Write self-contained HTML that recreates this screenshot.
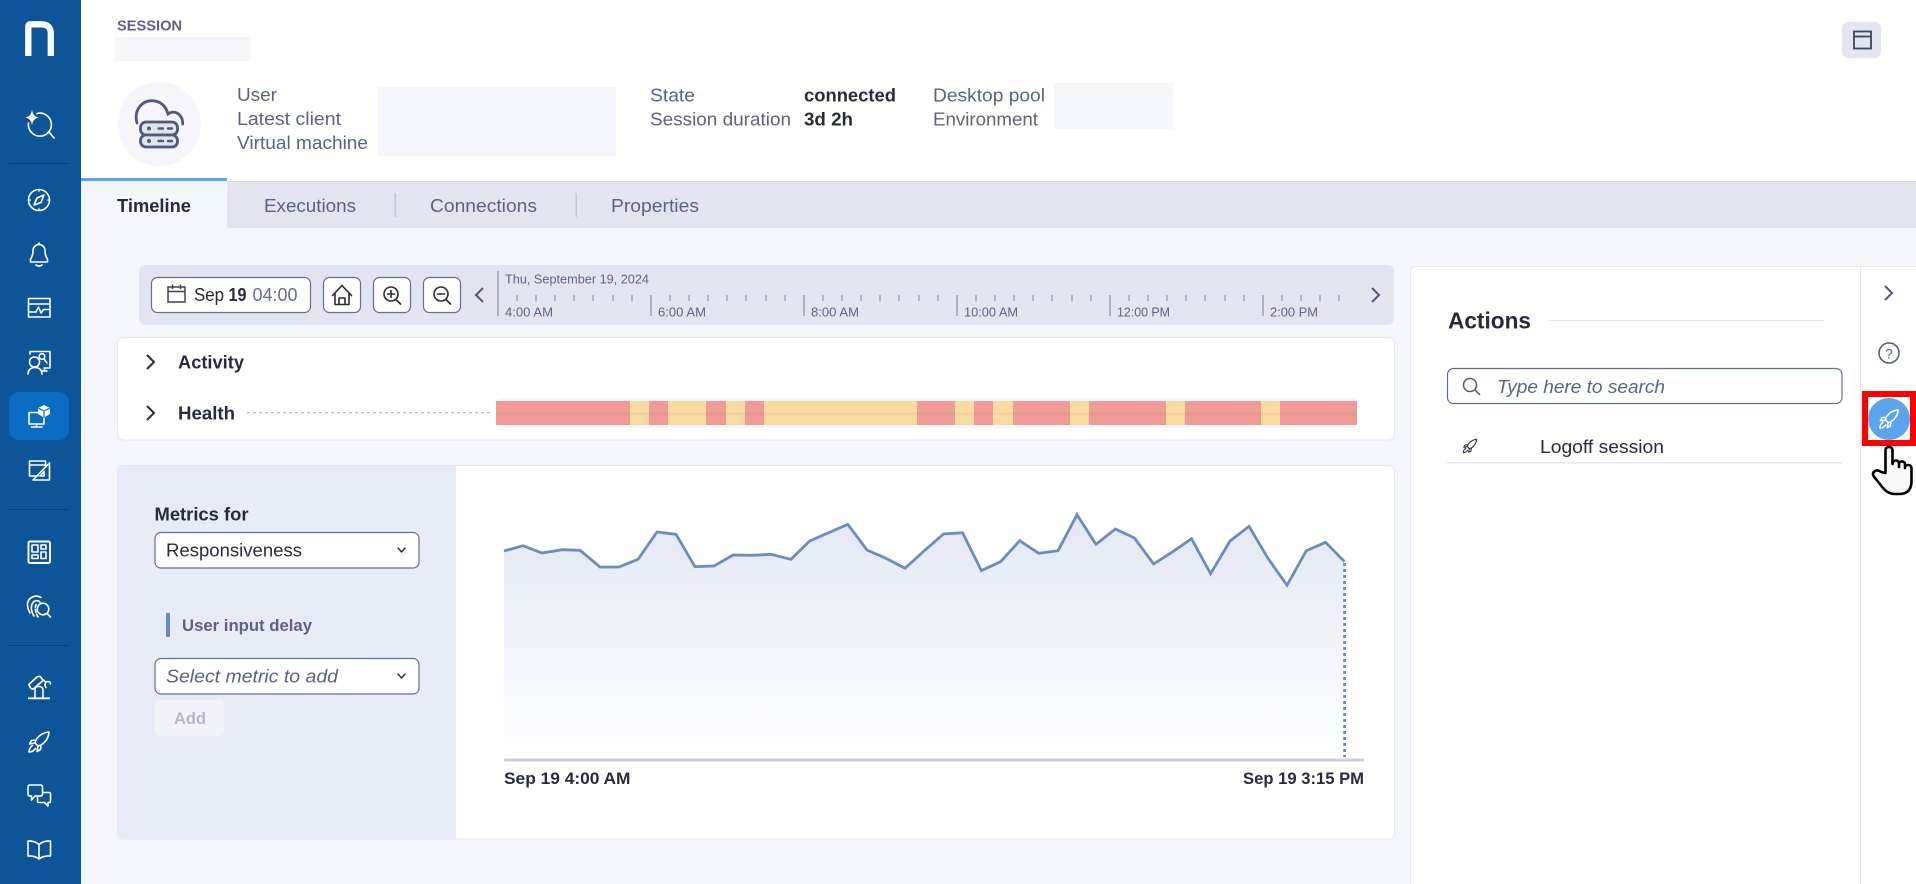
<!DOCTYPE html>
<html lang="en">
<head>
<meta charset="utf-8">
<title>Session</title>
<style>
html,body{margin:0;padding:0;width:1916px;height:884px;overflow:hidden;background:#f4f6fb}
svg{display:block;position:absolute;left:0;top:0}
text{font-family:"Liberation Sans",sans-serif;font-size:18px;fill:#5a6480;white-space:pre}
.d{fill:#262c3c}
.b{font-weight:700}
.i{font-style:italic}
.t{font-size:13px;fill:#5c6684}
.w{fill:none;stroke:#fff;stroke-width:1.6;stroke-linecap:round;stroke-linejoin:round}
.s{fill:none;stroke:#4f5a78;stroke-width:1.6;stroke-linecap:round;stroke-linejoin:round}
.k{fill:none;stroke:#262c3c;stroke-width:1.6;stroke-linecap:round;stroke-linejoin:round}
.btn{fill:#fff;stroke:#5f6f92;stroke-width:1.2}
</style>
</head>
<body>
<svg width="1916" height="884" viewBox="0 0 1916 884" xmlns="http://www.w3.org/2000/svg">
<defs>
<linearGradient id="g" x1="0" y1="0" x2="0" y2="1"><stop offset="0" stop-color="#e2e7f2"/><stop offset="1" stop-color="#ffffff"/></linearGradient>
<symbol id="rocket" viewBox="0 0 24 24" overflow="visible">
<path d="M22 2C17 2.500 12 5 9 10L8 13L11 16L14 15C19 12 21.500 7 22 2Z"/>
<path d="M9 10L4.500 10.500L2.500 14L8 13M14 15L13.500 19.500L10 21.500L11 16"/>
<path d="M5.500 15.500Q2 18 2 22Q6 22 8.500 18.500"/>
</symbol>
</defs>

<!-- page -->
<rect width="1916" height="884" fill="#f4f6fb"/>

<!-- sidebar -->
<rect width="81" height="884" fill="#0d5498"/>
<path d="M28.300 56V26.500Q28.300 24.300 30.500 24.300H41Q50.800 24.300 50.800 33.500V56" fill="none" stroke="#fff" stroke-width="6.300"/>
<path d="M32 110Q33 116.500 38.500 117.500Q33 118.500 32 125Q31 118.500 25.500 117.500Q31 116.500 32 110Z" fill="#fff"/>
<path class="w" d="M37 113.500A11.500 11.500 0 1 1 28.500 123M48.500 131.500L54 138"/>
<rect x="9" y="163" width="60" height="1" fill="#0a3e74"/>
<circle class="w" cx="39" cy="200" r="10.500"/>
<path class="w" d="M44 195L41 202.500L34 205L37 198Z"/>
<path class="w" d="M39 189.500V191M39 209V210.500M28.500 200H30M48 200H49.500"/>
<path class="w" d="M30.500 262H47.500V259Q45 256 45 250.500A6 6 0 0 0 33 250.500Q33 256 30.500 259ZM39 244.500V243M36 265Q39 267 42 265"/>
<path class="w" d="M28.500 298.500H50V317H28.500ZM28.500 304H50M28.500 312H36L38.500 307L41 313L43.500 309.500H50"/>
<path class="w" d="M30 354V351.500H50V368H44M42 371H47M44.500 368V371"/>
<circle class="w" cx="34.500" cy="362" r="5"/>
<circle class="w" cx="42" cy="356.500" r="2.800"/>
<path class="w" d="M44 359L47 363M28 374Q28.500 367.500 35 367.500Q41.500 367.500 42 374"/>
<rect x="9" y="392" width="60" height="48" rx="10" fill="#0b6cc4"/>
<path class="w" d="M38 412.500H29V424H44V418M31.500 427H42M36.500 424V427"/>
<path d="M44 405L50 408V414L44 417.500L38 414V408Z" fill="#fff"/>
<path d="M38 408L44 411L50 408M44 411V417.500" fill="none" stroke="#0b6cc4" stroke-width="1.200"/>
<path class="w" d="M29.500 461H45.500V466M29.500 461V476H38M29.500 465H45.500"/>
<path class="w" d="M49.500 463V480H33ZM44 476H40L44 471.500Z"/>
<rect x="9" y="509" width="60" height="1" fill="#0a3e74"/>
<rect x="28.500" y="541.500" width="21.500" height="21.500" rx="1.500" fill="none" stroke="#fff" stroke-width="1.900"/>
<path class="w" d="M32 545H38V552H32ZM41 545H46V549H41ZM41 552H46V558.500H41ZM32 555H38V558.500H32Z"/>
<path class="w" d="M30 613C26 606 27 600 31.500 597.500C35 595.500 38.500 596 41 597.500"/>
<path class="w" d="M34 616C30 610 31 604 34 601.500C37 600 39 601 40 602"/>
<path class="w" d="M36 604.500C34.500 608 35.500 613 38 617" stroke-dasharray="3 2"/>
<circle class="w" cx="43" cy="609" r="5.800"/>
<path class="w" d="M47 613.500L50.500 617"/>
<rect x="9" y="645" width="60" height="1" fill="#0a3e74"/>
<path d="M28 698.300H50" stroke="#fff" stroke-width="1.800"/>
<path class="w" d="M35 698V690Q35 686.500 38.500 686.500Q43 686.500 43 690V698"/>
<path class="w" d="M28.800 684.500L37 677Q39.500 675.500 41 677.500L43 680.500L34.500 688Q32.500 690 30.500 688Z"/>
<path class="w" d="M42 679L46 682M46 682Q50 680.500 50.500 684M46 682Q44 685 46 687.500"/>
<use href="#rocket" x="27" y="730" width="24" height="24" class="w"/>
<path class="w" d="M30 785H40.500Q42.500 785 42.500 787V794Q42.500 796 40.500 796H35L31.500 800V796H30Q28 796 28 794V787Q28 785 30 785Z"/>
<path class="w" d="M43 792.500H49Q50.500 792.500 50.500 794V801Q50.500 802.500 49 802.500H48V806L44.500 802.500H39Q37.500 802.500 37.500 801V796.500"/>
<path class="w" d="M39 844.500Q34.500 840.500 28 841V856Q34.500 855.500 39 859Q43.500 855.500 50.500 856V841Q43.500 840.500 39 844.500ZM39 844.500V859"/>

<!-- header -->
<rect x="81" width="1835" height="181" fill="#fff"/>
<text class="b" x="117" y="30.500" style="font-size:15px" textLength="65" lengthAdjust="spacingAndGlyphs">SESSION</text>
<rect x="115" y="37" width="136" height="24" fill="#f4f6fb"/>
<circle cx="159" cy="124" r="42" fill="#f4f6fb"/>
<path d="M137 123C133.500 110 142 100.700 152 100.700C160 100.700 166 106 168 114C175 109 183 115 182.700 124" fill="none" stroke="#4f5a78" stroke-width="2.800" stroke-linecap="round"/>
<rect x="140.500" y="122" width="37" height="13" rx="5.500" fill="#dfe4ef" stroke="#4f5a78" stroke-width="2.800"/>
<rect x="140.500" y="135" width="37" height="12" rx="5.500" fill="#dfe4ef" stroke="#4f5a78" stroke-width="2.800"/>
<circle cx="149" cy="128.500" r="2" fill="#4f5a78"/>
<circle cx="149" cy="141" r="2" fill="#4f5a78"/>
<path d="M158.500 128.500H163M168 128.500H172M158.500 141H163M168 141H172" stroke="#4f5a78" stroke-width="2.400" stroke-linecap="round"/>
<text x="237" y="101" textLength="40" lengthAdjust="spacingAndGlyphs">User</text>
<text x="237" y="125" textLength="104" lengthAdjust="spacingAndGlyphs">Latest client</text>
<text x="237" y="149" textLength="131" lengthAdjust="spacingAndGlyphs">Virtual machine</text>
<rect x="378" y="87" width="238" height="69" fill="#f4f6fb"/>
<text x="650" y="101.500" textLength="45" lengthAdjust="spacingAndGlyphs">State</text>
<text x="650" y="125.500" textLength="141" lengthAdjust="spacingAndGlyphs">Session duration</text>
<text class="d b" x="804" y="101.500" textLength="92" lengthAdjust="spacingAndGlyphs">connected</text>
<text class="d b" x="804" y="125.500" textLength="49" lengthAdjust="spacingAndGlyphs">3d 2h</text>
<text x="933" y="101.500" textLength="112" lengthAdjust="spacingAndGlyphs">Desktop pool</text>
<text x="933" y="125.500" textLength="105" lengthAdjust="spacingAndGlyphs">Environment</text>
<rect x="1054" y="83" width="119" height="46" fill="#f4f6fb"/>
<rect x="1842" y="22" width="39" height="36" rx="6" fill="#e2e5f0"/>
<rect x="1854" y="31.500" width="17" height="17" fill="none" stroke="#3a4258" stroke-width="1.800"/>
<path d="M1854 36.500H1871" stroke="#3a4258" stroke-width="1.800"/>

<!-- tabs -->
<rect x="81" y="181" width="1835" height="47" fill="#e2e5f0"/>
<rect x="81" y="181" width="1835" height="1" fill="#d6d9e6"/>
<rect x="81" y="181" width="146" height="47" fill="#f4f6fb"/>
<rect x="81" y="178" width="146" height="3" fill="#5aa5ec"/>
<text class="d b" x="117" y="212" textLength="74" lengthAdjust="spacingAndGlyphs">Timeline</text>
<text x="264" y="212" textLength="92" lengthAdjust="spacingAndGlyphs">Executions</text>
<rect x="394.500" y="193" width="1.500" height="24" fill="#c4c8d6"/>
<text x="430" y="212" textLength="107" lengthAdjust="spacingAndGlyphs">Connections</text>
<rect x="575.500" y="193" width="1.500" height="24" fill="#c4c8d6"/>
<text x="611" y="212" textLength="88" lengthAdjust="spacingAndGlyphs">Properties</text>

<!-- timeline toolbar -->
<rect x="139" y="265" width="1255" height="60" rx="6" fill="#e2e5f0"/>
<rect class="btn" x="151.500" y="277.500" width="159" height="35" rx="6"/>
<path d="M168 287H185V302H168ZM168 291.500H185M172.500 284.500V289M180.500 284.500V289" fill="none" stroke="#3a4258" stroke-width="1.500"/>
<text class="d" x="194" y="301" textLength="30" lengthAdjust="spacingAndGlyphs">Sep</text>
<text class="d b" x="228.500" y="301" textLength="18" lengthAdjust="spacingAndGlyphs">19</text>
<text x="252.500" y="301" textLength="45" lengthAdjust="spacingAndGlyphs" style="fill:#5f6f92">04:00</text>
<rect class="btn" x="323.500" y="277.500" width="37" height="35" rx="6"/>
<path class="k" d="M332.500 295.500L342 285.500L351.500 295.500M335 293V304.500H349V293M339 304.500V298H345V304.500"/>
<rect class="btn" x="373.500" y="277.500" width="37" height="35" rx="6"/>
<circle class="k" cx="391" cy="294" r="7"/>
<path class="k" d="M396 299.500L400.500 304M391 290.500V297.500M387.500 294H394.500"/>
<rect class="btn" x="423.500" y="277.500" width="37" height="35" rx="6"/>
<circle class="k" cx="441" cy="294" r="7"/>
<path class="k" d="M446 299.500L450.500 304M437.500 294H444.500"/>
<path d="M483 288L476 295L483 302" fill="none" stroke="#4f5a78" stroke-width="2"/>
<path d="M1372 288L1379 295L1372 302" fill="none" stroke="#4f5a78" stroke-width="2"/>
<path d="M498 271V316M651 295V316M804 295V316M957 295V316M1110 295V316M1263 295V316" stroke="#9aa0b6" stroke-width="1.500"/>
<path d="M517 295v6m19-6v6m19-6v6m19-6v6m19-6v6m20-6v6m19-6v6M670 295v6m19-6v6m19-6v6m19-6v6m19-6v6m20-6v6m19-6v6M823 295v6m19-6v6m19-6v6m19-6v6m19-6v6m20-6v6m19-6v6M976 295v6m19-6v6m19-6v6m19-6v6m19-6v6m20-6v6m19-6v6M1129 295v6m19-6v6m19-6v6m19-6v6m19-6v6m20-6v6m19-6v6M1282 295v6m19-6v6m19-6v6m19-6v6" stroke="#8f95ab" stroke-width="1.200"/>
<text class="t" x="505" y="283.500" textLength="144" lengthAdjust="spacingAndGlyphs">Thu, September 19, 2024</text>
<text class="t" x="505" y="316.500" textLength="48" lengthAdjust="spacingAndGlyphs">4:00 AM</text>
<text class="t" x="658" y="316.500" textLength="48" lengthAdjust="spacingAndGlyphs">6:00 AM</text>
<text class="t" x="811" y="316.500" textLength="48" lengthAdjust="spacingAndGlyphs">8:00 AM</text>
<text class="t" x="964" y="316.500" textLength="54" lengthAdjust="spacingAndGlyphs">10:00 AM</text>
<text class="t" x="1117" y="316.500" textLength="53" lengthAdjust="spacingAndGlyphs">12:00 PM</text>
<text class="t" x="1270" y="316.500" textLength="48" lengthAdjust="spacingAndGlyphs">2:00 PM</text>

<!-- activity / health -->
<rect x="117.500" y="337.500" width="1277" height="102.500" rx="6" fill="#fff" stroke="#e4e6f2"/>
<path d="M147 355L154 362L147 369M147 406L154 413L147 420" fill="none" stroke="#262c3c" stroke-width="2"/>
<text class="d b" x="178" y="368.500" textLength="66" lengthAdjust="spacingAndGlyphs">Activity</text>
<text class="d b" x="178" y="419.500" textLength="57" lengthAdjust="spacingAndGlyphs">Health</text>
<path d="M247 412.700H491.500" stroke="#b5b8c4" stroke-width="1.200" stroke-dasharray="3 3"/>
<rect x="496" y="398" width="861" height="30" rx="4" fill="#f5f6fa"/>
<rect x="496" y="401" width="861" height="24" fill="#f09b95"/>
<path d="M630 401h19v24h-19zM668 401h38v24h-38zM726 401h19v24h-19zM764 401h153v24h-153zM955 401h19v24h-19zM993 401h20v24h-20zM1070 401h19v24h-19zM1166 401h19v24h-19zM1261 401h19v24h-19z" fill="#f9dba2"/>
<rect x="496" y="412.500" width="861" height="3" fill="#7a6a50" opacity=".06"/>

<!-- metrics -->
<rect x="117.500" y="465.500" width="1277" height="373.500" rx="6" fill="#fff" stroke="#e4e6f2"/>
<path d="M456 466V839H123Q118 839 118 834V471Q118 466 123 466Z" fill="#e7ebf5"/>
<text class="d b" x="154.500" y="520.500" textLength="94" lengthAdjust="spacingAndGlyphs">Metrics for</text>
<rect class="btn" x="155" y="532.500" width="264" height="35.500" rx="6"/>
<text class="d" x="166" y="556.500" textLength="136" lengthAdjust="spacingAndGlyphs">Responsiveness</text>
<path class="k" d="M398 548L401.500 552L405 548" style="stroke-width:1.400"/>
<rect x="166" y="613" width="4" height="24" rx="1" fill="#6b8abb"/>
<text class="b" x="182" y="631" textLength="130" lengthAdjust="spacingAndGlyphs" style="font-size:17px">User input delay</text>
<rect class="btn" x="155" y="658.500" width="264" height="35.500" rx="6"/>
<text class="i" x="166" y="682.500" textLength="172" lengthAdjust="spacingAndGlyphs">Select metric to add</text>
<path class="k" d="M398 674L401.500 678L405 674" style="stroke-width:1.400"/>
<rect x="154.500" y="700" width="69.500" height="36" rx="5" fill="#f1f3f9"/>
<text class="b" x="174" y="724" textLength="32" lengthAdjust="spacingAndGlyphs" style="font-size:17px;fill:#b2b7c8">Add</text>

<!-- chart -->
<path d="M504 551L523 545.700L542 553L562 549.700L580 550.300L600 567L619 567L638 559.300L657 532L676 534.300L695 566.700L714 566L733 555L753 555.300L771 554.300L791 559.300L809.600 541L828.700 532.700L847.800 524.300L867 550L886 558.300L905 568.300L924 551L943.500 534L962.600 532.700L981.400 570.700L1000.500 561.700L1019.700 540.700L1038.800 553.300L1058 550.700L1077 514.700L1096 544.300L1115.300 529L1134.500 538L1153.600 564L1172.800 551.700L1191.500 538.700L1210.600 573.700L1230 541L1249 526.300L1268 558.300L1287 585.300L1306.300 550.700L1325.500 542.300L1344.600 561.700V759H504Z" fill="url(#g)"/>
<rect x="504" y="758.500" width="860" height="3" fill="#cdd1de"/>
<path d="M504 551L523 545.700L542 553L562 549.700L580 550.300L600 567L619 567L638 559.300L657 532L676 534.300L695 566.700L714 566L733 555L753 555.300L771 554.300L791 559.300L809.600 541L828.700 532.700L847.800 524.300L867 550L886 558.300L905 568.300L924 551L943.500 534L962.600 532.700L981.400 570.700L1000.500 561.700L1019.700 540.700L1038.800 553.300L1058 550.700L1077 514.700L1096 544.300L1115.300 529L1134.500 538L1153.600 564L1172.800 551.700L1191.500 538.700L1210.600 573.700L1230 541L1249 526.300L1268 558.300L1287 585.300L1306.300 550.700L1325.500 542.300L1344.600 561.700" fill="none" stroke="#6b8cbf" stroke-width="2.800"/>
<path d="M1344.600 563V757" fill="none" stroke="#6b8cbf" stroke-width="2.800" stroke-dasharray="3 3"/>
<text class="d b" x="504" y="784" textLength="126.500" lengthAdjust="spacingAndGlyphs" style="font-size:17px">Sep 19 4:00 AM</text>
<text class="d b" x="1243" y="784" textLength="121" lengthAdjust="spacingAndGlyphs" style="font-size:17px">Sep 19 3:15 PM</text>

<!-- right panel -->
<path d="M1925 266.500H1416Q1410.500 266.500 1410.500 272V895H1925Z" fill="#fff" stroke="#e4e6f2"/>
<rect x="1860" y="266" width="1" height="618" fill="#e4e6f2"/>
<text class="d b" x="1448" y="328.500" textLength="83" lengthAdjust="spacingAndGlyphs" style="font-size:23px">Actions</text>
<rect x="1549" y="320" width="275" height="1" fill="#e4e6f2"/>
<rect class="btn" x="1447.500" y="368.500" width="394.500" height="35" rx="6"/>
<circle cx="1470" cy="385" r="6.500" fill="none" stroke="#4f5a78" stroke-width="1.500"/>
<path d="M1475 390L1480 395" stroke="#4f5a78" stroke-width="1.500"/>
<text class="i" x="1497" y="393" textLength="168" lengthAdjust="spacingAndGlyphs">Type here to search</text>
<use href="#rocket" x="1462" y="438" width="16" height="16" class="k"/>
<text class="d" x="1540" y="453" textLength="124" lengthAdjust="spacingAndGlyphs">Logoff session</text>
<rect x="1447" y="462" width="395" height="1.500" fill="#e4e6f2"/>
<path d="M1885 286L1892 293L1885 300" fill="none" stroke="#4f5a78" stroke-width="2"/>
<circle cx="1889" cy="353" r="10" fill="none" stroke="#4f5a78" stroke-width="1.500"/>
<text x="1889" y="358.500" text-anchor="middle" style="font-size:14px">?</text>
<rect x="1865" y="394" width="48" height="49" fill="none" stroke="#ff0000" stroke-width="6"/>
<circle cx="1889" cy="419" r="21" fill="#5aa5ec"/>
<use href="#rocket" x="1878" y="408" width="22" height="22" class="w"/>
<path d="M1885.500 473V450.500Q1885.500 447 1889 447Q1892.500 447 1892.500 450.500V464Q1892.500 460.500 1896 460.500Q1899 460.500 1899 464V467V464Q1899 461.500 1902 461.500Q1905 461.500 1905 464.500V468Q1905 465 1908 465Q1911.500 465 1911.500 468.500V481Q1911.500 494 1899 494H1895Q1888 494 1883 488L1873.500 476Q1872 473 1875 471Q1878 469.500 1881 472Z" fill="#f8f8f8" stroke="#000" stroke-width="2.600" stroke-linejoin="round"/>
</svg>
</body>
</html>
